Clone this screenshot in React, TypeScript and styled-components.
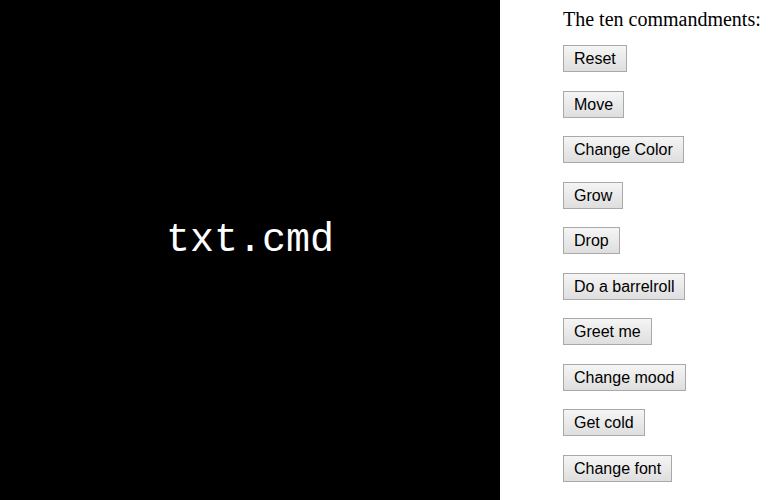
import React from "react";
import styled, { createGlobalStyle } from "styled-components";

const Global = createGlobalStyle`
  html, body { margin: 0; padding: 0; background: #fff; }
  body { font-family: "Liberation Serif", "Times New Roman", serif; }
`;

const Page = styled.div`
  display: flex;
  gap: 63px;
  width: 777px;
  height: 500px;
`;

const Stage = styled.div`
  width: 500px;
  height: 500px;
  box-sizing: border-box;
  padding-bottom: 18px;
  background: #000;
  display: flex;
  align-items: center;
  justify-content: center;
`;

const Title = styled.div`
  color: #fff;
  font-family: "Liberation Mono", "Courier New", monospace;
  font-size: 40px;
  line-height: 1;
`;

const Panel = styled.div`
  display: flex;
  flex-direction: column;
  align-items: flex-start;
  padding-top: 8px;
`;

const Heading = styled.div`
  font-size: 20px;
  line-height: 23px;
  color: #000;
  margin-bottom: 14px;
`;

const Commands = styled.div`
  display: flex;
  flex-direction: column;
  align-items: flex-start;
  gap: 18.5px;
`;

const Button = styled.button`
  font-family: "Liberation Sans", Arial, sans-serif;
  font-size: 16px;
  line-height: 19px;
  height: 27px;
  padding: 3px 10px;
  color: #000;
  border: 1px solid #a9a9a9;
  border-radius: 0;
  background: linear-gradient(#f5f5f5, #dedede);
  cursor: pointer;
`;

const commands = [
  "Reset",
  "Move",
  "Change Color",
  "Grow",
  "Drop",
  "Do a barrelroll",
  "Greet me",
  "Change mood",
  "Get cold",
  "Change font",
];

export default function App() {
  return (
    <>
      <Global />
      <Page>
        <Stage>
          <Title>txt.cmd</Title>
        </Stage>
        <Panel>
          <Heading>The ten commandments:</Heading>
          <Commands>
            {commands.map((c) => (
              <Button key={c}>{c}</Button>
            ))}
          </Commands>
        </Panel>
      </Page>
    </>
  );
}
